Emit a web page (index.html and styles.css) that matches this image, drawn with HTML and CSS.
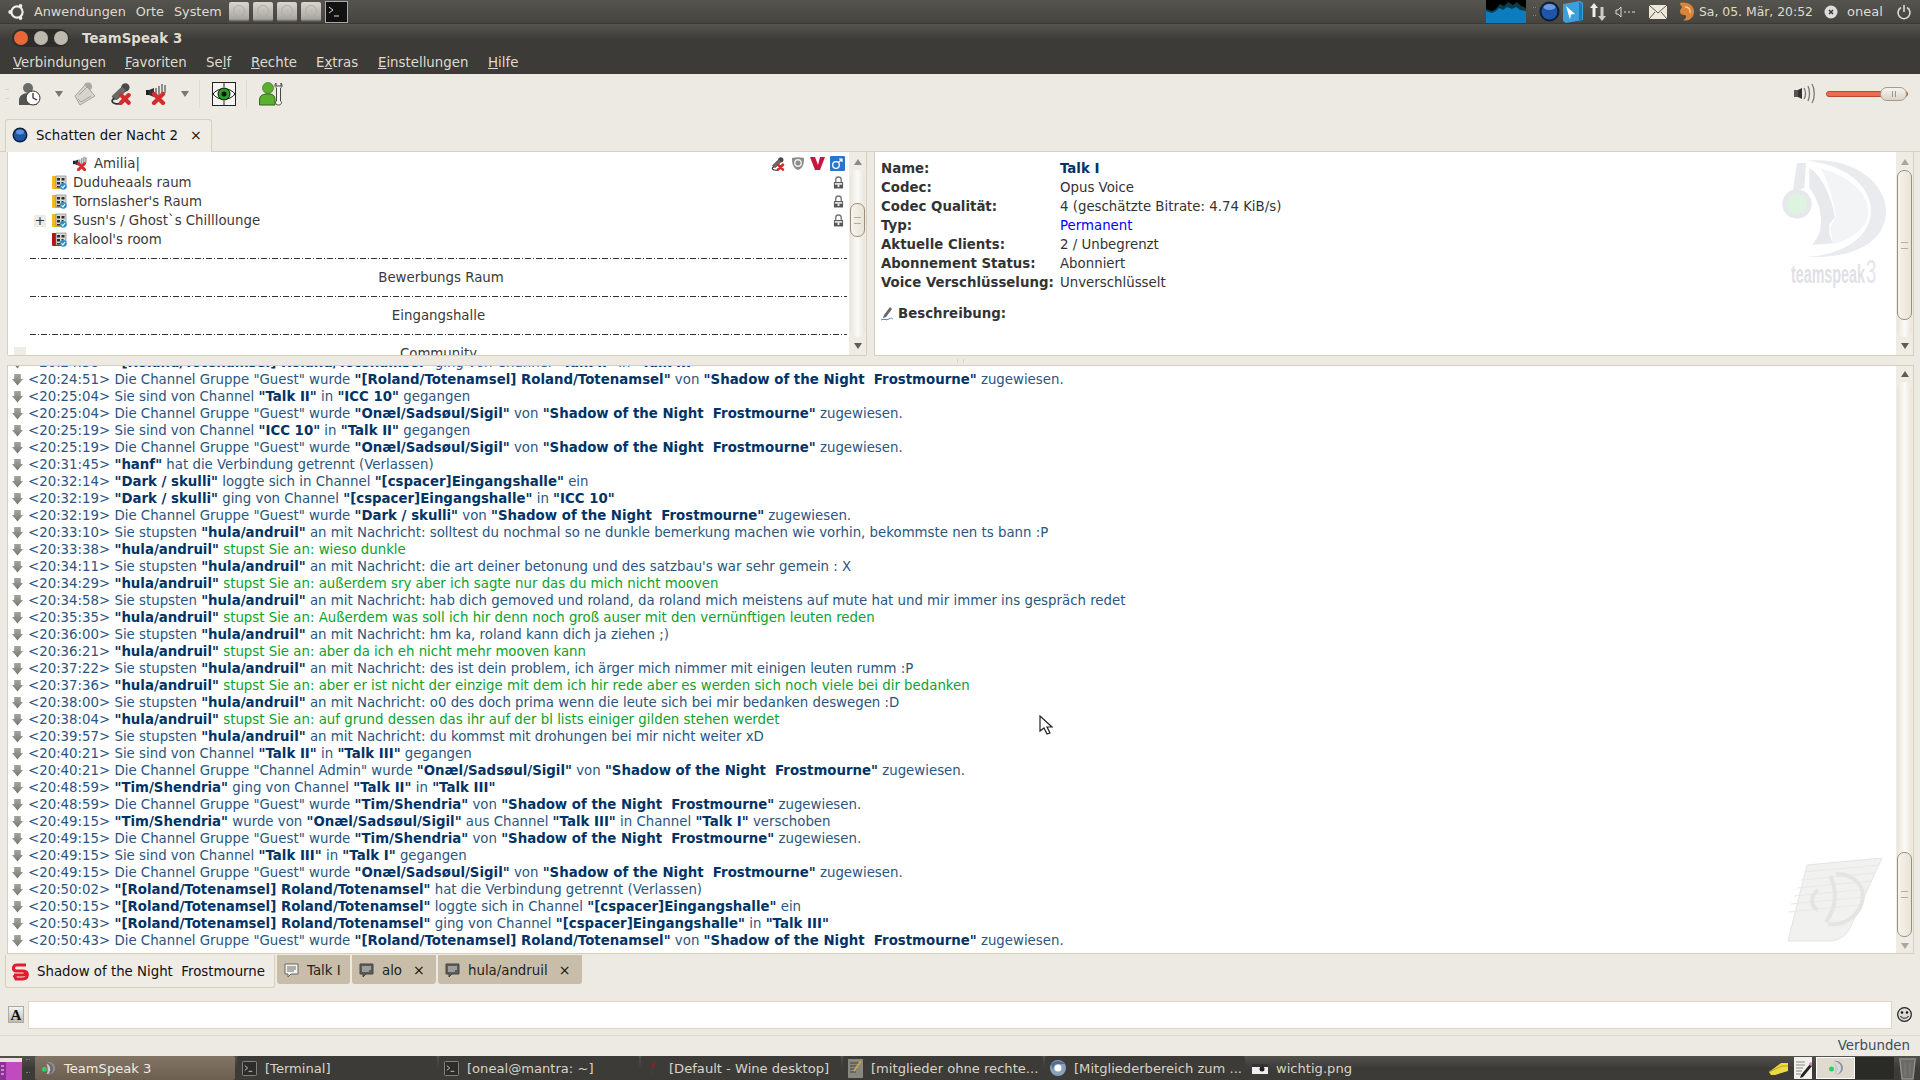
FILE: index.html
```html
<!DOCTYPE html>
<html lang="de">
<head>
<meta charset="utf-8">
<title>TeamSpeak 3</title>
<link rel="stylesheet" href="styles.css">
</head>
<body>
<svg class="defs" width="0" height="0">
  <defs>
    <linearGradient id="disk" x1="0" y1="0" x2="0" y2="1"><stop offset="0" stop-color="#d8d6d0"/><stop offset=".85" stop-color="#a9a7a0"/><stop offset="1" stop-color="#44433f"/></linearGradient>
    <symbol id="disk-i" viewBox="0 0 22 22"><rect x="1" y="1" width="20" height="20" rx="2" fill="url(#disk)"/><circle cx="11" cy="10" r="5.500" fill="none" stroke="#aeaca5"/><circle cx="11" cy="10" r="1.500" fill="#bdbbb4"/></symbol>
    <symbol id="term" viewBox="0 0 16 16"><rect x=".5" y=".5" width="15" height="15" rx="1" fill="#2c2c2a" stroke="#8b8a84"/><path d="M3 5l3 2.500-3 2.500M7 11h4" stroke="#c9c7c0" fill="none"/></symbol>
    <symbol id="chan" viewBox="0 0 15 15"><path d="M1 1h12v13H1.500C.5 14 0 13.500 0 12.500V2c0-.6.4-1 1-1z" fill="#f4b91c"/><rect x="4" y="1" width="10" height="12" fill="#d8d8d4" stroke="#777" stroke-width=".6"/><path d="M5 3h3v2.500H5zM9.500 3h3v2.500h-3zM5 7h3v2.500H5zM5 11h3v1.500H5zM9.500 7h2v1.500h-2z" fill="#2c2c2c"/><circle cx="11.300" cy="11.300" r="3.400" fill="#2a8fc8"/><path d="M9.500 11.300l1.400 1.500 2.100-2.800" stroke="#fff" stroke-width="1.100" fill="none"/></symbol>
    <symbol id="chan-r" viewBox="0 0 15 15"><path d="M1 1h12v13H1.500C.5 14 0 13.500 0 12.500V2c0-.6.4-1 1-1z" fill="#b01414"/><rect x="4" y="1" width="10" height="12" fill="#d8d8d4" stroke="#777" stroke-width=".6"/><path d="M5 3h3v2.500H5zM9.500 3h3v2.500h-3zM5 7h3v2.500H5zM5 11h3v1.500H5zM9.500 7h2v1.500h-2z" fill="#2c2c2c"/><circle cx="11.300" cy="11.300" r="3.400" fill="#2a8fc8"/><path d="M9.500 11.300l1.400 1.500 2.100-2.800" stroke="#fff" stroke-width="1.100" fill="none"/></symbol>
    <symbol id="lock" viewBox="0 0 12 14"><path d="M3 7V4a3 3 0 0 1 6 0v3" fill="none" stroke="#777" stroke-width="1.500"/><rect x="1" y="6.500" width="10" height="7" fill="#555"/><rect x="2" y="7.500" width="8" height="2" fill="#ddd"/><rect x="5" y="9" width="2" height="3" fill="#eee"/></symbol>
    <symbol id="spk-x" viewBox="0 0 22 22"><rect x="0" y="7" width="3" height="5" fill="#222"/><path d="M3 7l5-2v9l-5-2z" fill="#333"/><path d="M10 5v9M13 3v10M16 1v12M19 2v8" stroke="#777" stroke-width="1.600"/><path d="M8 11l9 9M17 11l-9 9" stroke="#d42c2c" stroke-width="4.200" stroke-linecap="round"/></symbol>
    <symbol id="mic-x" viewBox="0 0 20 20"><circle cx="14" cy="4" r="3.800" fill="#4a4a4a"/><path d="M11.500 3L2 12l1.500 2.500 3 .5L15 6.500z" fill="#6a6a6a" stroke="#333" stroke-width=".6"/><path d="M4 14c-4 2-2 5 4 5h2" fill="none" stroke="#333" stroke-width="1.600"/><path d="M10 11l7 7M17 11l-7 7" stroke="#d42c2c" stroke-width="3.800" stroke-linecap="round"/></symbol>
    <symbol id="bubble" viewBox="0 0 15 15"><path d="M1 1h13v10H7l-3 3v-3H1z" fill="#f5f4f0" stroke="#666"/><path d="M3 4h9M3 6h9M3 8h7" stroke="#666"/></symbol>
    <symbol id="bubble-d" viewBox="0 0 15 15"><path d="M1 1h13v10H7l-3 3v-3H1z" fill="#5c5c5a" stroke="#444"/><path d="M3 4h9M3 6h9M3 8h7" stroke="#ddd"/></symbol>
    <symbol id="up" viewBox="0 0 8 8"><path d="M0 7L4 1l4 6z"/></symbol>
    <symbol id="down" viewBox="0 0 8 8"><path d="M0 1l4 6 4-6z"/></symbol>
    <symbol id="tslogo" viewBox="0 0 16 16"><path d="M6 1c5-1 9 3 9 7s-4 7-9 7c4 0 7-3 7-7s-3-6-7-7z" fill="#8a93a8"/><path d="M6 3c3 1 4 4 4 7l-1 1v2l-3 1c2-3 1-8 0-11z" fill="#c4cbd9"/><circle cx="3.500" cy="9" r="2.500" fill="#30d060"/></symbol>
  </defs>
</svg>

<header class="top-panel">
  <svg class="ubuntu" width="18" height="18" viewBox="0 0 18 18"><circle cx="9" cy="9" r="5.600" fill="none" stroke="#eee" stroke-width="2.200"/><circle cx="2.200" cy="9" r="1.900" fill="#eee"/><circle cx="12.500" cy="3" r="1.900" fill="#eee"/><circle cx="12.500" cy="15" r="1.900" fill="#eee"/></svg>
  <nav class="panel-menu"><span>Anwendungen</span><span>Orte</span><span>System</span></nav>
  <div class="launchers">
    <svg width="22" height="22"><use href="#disk-i"/></svg><svg width="22" height="22"><use href="#disk-i"/></svg><svg width="22" height="22"><use href="#disk-i"/></svg><svg width="22" height="22"><use href="#disk-i"/></svg>
    <svg class="term-l" width="23" height="22" viewBox="0 0 23 22"><rect x=".5" y=".5" width="22" height="21" fill="#111" stroke="#aaa"/><path d="M4 6l4 3-4 3M9 15h5" stroke="#ddd" fill="none"/></svg>
  </div>
  <div class="tray">
    <svg class="graph" width="40" height="23" viewBox="0 0 40 23"><rect width="40" height="23" fill="#000"/><path d="M0 9l6 2 4-2 4-5 4 2 4-4 5 3 4-3 4 4 5 2v17H0z" fill="#0a3c4a"/><path d="M0 11l6 2 4-2 3-3 4 2 4-3 5 2 4-2 4 3 6 1v12H0z" fill="#0a7cc0"/></svg>
    <span class="tray-grip"></span>
    <svg class="t1" width="21" height="21" viewBox="0 0 21 21"><circle cx="10.500" cy="10.500" r="10" fill="#0c1c34"/><circle cx="10.500" cy="10.500" r="8" fill="#1f55a8"/><ellipse cx="10.500" cy="6" rx="6" ry="3" fill="#6a9ade"/></svg>
    <svg class="t2" width="22" height="24" viewBox="0 0 22 24"><path d="M1 4l17-3 3 2v17l-17 3-3-2z" fill="#3a9fdc"/><path d="M17 2l3 2v16l-3 2z" fill="#1c78b8"/><path d="M4 6l9 8-4 .5-1 5z" fill="#fff"/></svg>
    <svg class="t3" width="18" height="20" viewBox="0 0 18 20"><path d="M5 1l4 5H6.500v9h-3V6H1z" fill="#eee"/><path d="M13 19l-4-5h2.500V5h3v9H17z" fill="#ccc"/></svg>
    <svg class="t4" width="21" height="14" viewBox="0 0 21 14"><path d="M1 5h2l3-3v10l-3-3H1z" fill="none" stroke="#ddd"/><path d="M9 7h2M13 7h2M17 7h3" stroke="#ddd"/></svg>
    <svg class="t5" width="18" height="14" viewBox="0 0 18 14"><rect width="18" height="14" fill="#eee8d8"/><path d="M0 0l9 8 9-8M0 14l6-7M18 14l-6-7" stroke="#555" fill="none"/></svg>
    <svg class="t6" width="18" height="20" viewBox="0 0 18 20"><path d="M3 1c8-2 15 3 14 10-1 6-7 9-11 7 3-1 4-4 2-5-3 0-5-1-5-4 0-2 2-3 2-4 0-1-2-1-2-4z" fill="#d9843a"/><path d="M8 5c3 0 6 2 5 6" stroke="#f3d2a6" fill="none" stroke-width="1.300"/></svg>
    <span class="clock">Sa, 05. Mär, 20:52</span>
    <svg class="t7" width="14" height="14" viewBox="0 0 14 14"><circle cx="7" cy="7" r="6.500" fill="#ddd"/><path d="M5 5l4 4M9 5l-4 4" stroke="#333" stroke-width="1.500"/></svg>
    <span class="user">oneal</span>
    <svg class="t8" width="16" height="16" viewBox="0 0 16 16"><path d="M5 3.500a6 6 0 1 0 6 0M8 1v7" fill="none" stroke="#ddd" stroke-width="1.600"/></svg>
  </div>
</header>

<div class="titlebar">
  <div class="win-btns"><i class="wb close"></i><i class="wb min"></i><i class="wb max"></i></div>
  <strong class="win-title">TeamSpeak 3</strong>
</div>

<nav class="menubar">
  <span class="m1"><u>V</u>erbindungen</span><span class="m2"><u>F</u>avoriten</span><span class="m3">Se<u>l</u>f</span><span class="m4"><u>R</u>echte</span><span class="m5">E<u>x</u>tras</span><span class="m6"><u>E</u>instellungen</span><span class="m7"><u>H</u>ilfe</span>
</nav>

<div class="toolbar">
  <span class="grip"></span>
  <svg class="ti a" width="24" height="24" viewBox="0 0 24 24"><circle cx="10" cy="6" r="5" fill="#6a6a6a"/><path d="M1 23v-5c0-4 4-7 9-7s9 3 9 7v5z" fill="#555"/><circle cx="15" cy="16" r="7" fill="#fdfdfb" stroke="#333"/><path d="M15 11v5l4 2" stroke="#222" stroke-width="1.200" fill="none"/></svg>
  <svg class="tdrop" width="8" height="8"><use href="#down" fill="#77766f"/></svg>
  <svg class="ti b" width="24" height="24" viewBox="0 0 24 24"><circle cx="15" cy="4.500" r="4" fill="#a9a8a3"/><path d="M12 3L2 14l5 9 15-9-5-6z" fill="#d6d4cd" stroke="#a5a39c"/><path d="M6 13l9-9M5 17l3 3 10-6" stroke="#a5a39c" fill="none"/></svg>
  <svg class="ti c" width="22" height="22"><use href="#mic-x"/></svg>
  <svg class="ti d" width="24" height="22"><use href="#spk-x"/></svg>
  <svg class="tdrop e" width="8" height="8"><use href="#down" fill="#77766f"/></svg>
  <span class="tsep s1"></span>
  <svg class="ti f" width="24" height="24" viewBox="0 0 24 24"><rect x=".5" y=".5" width="23" height="23" fill="#f4f4f0" stroke="#222"/><path d="M12 1v4M12 19v4" stroke="#222"/><path d="M1 12C6 5 18 5 23 12 18 19 6 19 1 12z" fill="#fff" stroke="#111"/><circle cx="12" cy="12" r="6" fill="#22a020" stroke="#111"/><circle cx="12" cy="12" r="2.500" fill="#111"/></svg>
  <span class="tsep s2"></span>
  <svg class="ti g" width="24" height="24" viewBox="0 0 24 24"><circle cx="9" cy="6" r="5.500" fill="#5cb030" stroke="#2e6a14" stroke-width=".6"/><path d="M.5 23v-5c0-5 4-6 8.500-6s7 1 7 6v5z" fill="#5cb030" stroke="#2e6a14"/><path d="M17 1c-2 2-1 4 .5 5v13c-2 1-1 4 2 4s4-3 2-4V6c2-1 2-3 .5-5v3h-5z" fill="#f4f4f0" stroke="#333" stroke-width=".9"/></svg>
  <div class="volume">
    <svg width="23" height="21" viewBox="0 0 23 21"><rect x="1" y="7" width="4" height="7" fill="#555"/><path d="M5 7l4-2v11l-4-2z" fill="#333"/><path d="M11 5c2 3 2 8 0 11M15 3c2 4 2 11 0 15M19 1c3 5 3 14 0 19" fill="none" stroke="#777" stroke-width="1.300"/></svg>
    <div class="vol-track"><span class="vol-thumb"><i></i><i></i></span></div>
  </div>
</div>

<div class="conn-tabs">
  <div class="conn-tab">
    <svg width="16" height="16" viewBox="0 0 16 16"><circle cx="8" cy="8" r="7.500" fill="#0e2240"/><circle cx="8" cy="8" r="6" fill="#1e55a6"/><ellipse cx="8" cy="5" rx="4" ry="2.500" fill="#5f90d8"/></svg>
    <span class="ct-label">Schatten der Nacht 2</span>
    <span class="x">×</span>
  </div>
</div>

<section class="upper">
  <div class="tree-wrap">
    <div class="tree">
      <div class="row client"><svg width="15" height="15"><use href="#spk-x"/></svg><span>Amilia|</span>
        <span class="badges">
          <svg width="14" height="14"><use href="#mic-x"/></svg>
          <svg width="14" height="15" viewBox="0 0 14 15"><path d="M1 2c4-1 8-1 12 0 0 6-1 10-6 12C2 12 1 8 1 2z" fill="#8b8b88"/><circle cx="7" cy="7" r="3.200" fill="none" stroke="#eee" stroke-width="1.400"/></svg>
          <svg width="15" height="15" viewBox="0 0 15 15"><path d="M0 1h5l3 8 2-8h5l-5 13H5z" fill="#cc1440"/></svg>
          <svg width="15" height="15" viewBox="0 0 15 15"><rect width="15" height="15" rx="1" fill="#2a76cc"/><circle cx="6" cy="9" r="3.300" fill="none" stroke="#fff" stroke-width="1.300"/><path d="M8.500 6.500L12 3M9 3h3v3" stroke="#fff" fill="none" stroke-width="1.200"/></svg>
        </span>
      </div>
      <div class="row chan"><svg width="15" height="15"><use href="#chan"/></svg><span>Duduheaals raum</span><svg class="lock" width="11" height="13"><use href="#lock"/></svg></div>
      <div class="row chan"><svg width="15" height="15"><use href="#chan"/></svg><span>Tornslasher's Raum</span><svg class="lock" width="11" height="13"><use href="#lock"/></svg></div>
      <div class="row chan sub"><b class="exp">+</b><svg width="15" height="15"><use href="#chan"/></svg><span>Susn's / Ghost`s Chilllounge</span><svg class="lock" width="11" height="13"><use href="#lock"/></svg></div>
      <div class="row chan"><svg width="15" height="15"><use href="#chan-r"/></svg><span>kalool's room</span></div>
      <div class="row spacer"><i class="dash"></i></div>
      <div class="row spacer-t e1">Bewerbungs Raum</div>
      <div class="row spacer"><i class="dash"></i></div>
      <div class="row spacer-t e2">Eingangshalle</div>
      <div class="row spacer"><i class="dash"></i></div>
      <div class="row spacer-t e2"><b class="exp2"></b>Community</div>
    </div>
    <div class="sb sb-tree">
      <svg class="ar" width="8" height="8"><use href="#up" fill="#8d8b84"/></svg>
      <div class="trough"><div class="thumb th1"><i></i></div></div>
      <svg class="ar" width="8" height="8"><use href="#down" fill="#5d5c56"/></svg>
    </div>
  </div>
  <span class="v-grip"></span>
  <div class="info-wrap">
    <div class="info">
      <div class="info-grid">
        <b>Name:</b><b class="navy">Talk I</b>
        <b>Codec:</b><span>Opus Voice</span>
        <b>Codec Qualität:</b><span>4 (geschätzte Bitrate: 4.74 KiB/s)</span>
        <b>Typ:</b><span class="blue">Permanent</span>
        <b>Aktuelle Clients:</b><span>2 / Unbegrenzt</span>
        <b>Abonnement Status:</b><span>Abonniert</span>
        <b>Voice Verschlüsselung:</b><span>Unverschlüsselt</span>
      </div>
      <div class="desc">
        <svg width="12" height="14" viewBox="0 0 12 14"><path d="M9 0l2 2-6 8-3 1 1-3z" fill="#666"/><path d="M0 13c3-2 5 1 8-1s3 0 4 0" stroke="#3a88c0" fill="none"/></svg>
        <b>Beschreibung:</b>
      </div>
      <svg class="ts-mark" width="108" height="132" viewBox="250 40 324 396">
        <path d="M330 48C460 35 565 110 565 200S470 350 300 335C400 345 520 290 520 200 520 120 440 60 330 48z" fill="#eaebee"/>
        <path d="M370 72C445 90 512 140 512 200 512 250 460 285 405 298L398 250 415 215C405 160 392 110 370 72z" fill="#f3f4f6"/>
        <path d="M335 70C370 90 400 150 412 218L395 238V268L405 296 343 300C385 260 375 180 335 130z" fill="#e8e9ed"/>
        <path d="M298 55H325L320 130 285 142z" fill="#e8e9ed"/>
        <circle cx="298" cy="178" r="44" fill="#e6e8ec"/><circle cx="298" cy="178" r="30" fill="#dcf4e0"/>
        <text transform="translate(280 415) scale(.55 1)" class="ts-txt">teamspeak<tspan class="ts-3" dx="6">3</tspan></text>
      </svg>
    </div>
    <div class="sb sb-info">
      <svg class="ar" width="8" height="8"><use href="#up" fill="#a8a69e"/></svg>
      <div class="trough"><div class="thumb th2"><i></i></div></div>
      <svg class="ar" width="8" height="8"><use href="#down" fill="#5d5c56"/></svg>
    </div>
  </div>
</section>

<div class="h-split"><span class="h-grip"></span></div>

<section class="log-wrap">
  <div class="log">
    <div class="r"><i></i><span>&lt;20:24:38&gt; <b>"[Roland/Totenamsel] Roland/Totenamsel"</b> ging von Channel <b>"Talk II"</b> in <b>"Talk III"</b></span></div>
    <div class="r"><i></i><span>&lt;20:24:51&gt; Die Channel Gruppe "Guest" wurde <b>"[Roland/Totenamsel] Roland/Totenamsel"</b> von <b>"Shadow of the Night  Frostmourne"</b> zugewiesen.</span></div>
    <div class="r"><i></i><span>&lt;20:25:04&gt; Sie sind von Channel <b>"Talk II"</b> in <b>"ICC 10"</b> gegangen</span></div>
    <div class="r"><i></i><span>&lt;20:25:04&gt; Die Channel Gruppe "Guest" wurde <b>"Onæl/Sadsøul/Sigil"</b> von <b>"Shadow of the Night  Frostmourne"</b> zugewiesen.</span></div>
    <div class="r"><i></i><span>&lt;20:25:19&gt; Sie sind von Channel <b>"ICC 10"</b> in <b>"Talk II"</b> gegangen</span></div>
    <div class="r"><i></i><span>&lt;20:25:19&gt; Die Channel Gruppe "Guest" wurde <b>"Onæl/Sadsøul/Sigil"</b> von <b>"Shadow of the Night  Frostmourne"</b> zugewiesen.</span></div>
    <div class="r"><i></i><span>&lt;20:31:45&gt; <b>"hanf"</b> hat die Verbindung getrennt (Verlassen)</span></div>
    <div class="r"><i></i><span>&lt;20:32:14&gt; <b>"Dark / skulli"</b> loggte sich in Channel <b>"[cspacer]Eingangshalle"</b> ein</span></div>
    <div class="r"><i></i><span>&lt;20:32:19&gt; <b>"Dark / skulli"</b> ging von Channel <b>"[cspacer]Eingangshalle"</b> in <b>"ICC 10"</b></span></div>
    <div class="r"><i></i><span>&lt;20:32:19&gt; Die Channel Gruppe "Guest" wurde <b>"Dark / skulli"</b> von <b>"Shadow of the Night  Frostmourne"</b> zugewiesen.</span></div>
    <div class="r"><i></i><span>&lt;20:33:10&gt; Sie stupsten <b>"hula/andruil"</b> an mit Nachricht: solltest du nochmal so ne dunkle bemerkung machen wie vorhin, bekommste nen ts bann :P</span></div>
    <div class="r"><i></i><span>&lt;20:33:38&gt; <b>"hula/andruil"</b> <em>stupst Sie an: wieso dunkle</em></span></div>
    <div class="r"><i></i><span>&lt;20:34:11&gt; Sie stupsten <b>"hula/andruil"</b> an mit Nachricht: die art deiner betonung und des satzbau's war sehr gemein : X</span></div>
    <div class="r"><i></i><span>&lt;20:34:29&gt; <b>"hula/andruil"</b> <em>stupst Sie an: außerdem sry aber ich sagte nur das du mich nicht mooven</em></span></div>
    <div class="r"><i></i><span>&lt;20:34:58&gt; Sie stupsten <b>"hula/andruil"</b> an mit Nachricht: hab dich gemoved und roland, da roland mich meistens auf mute hat und mir immer ins gespräch redet</span></div>
    <div class="r"><i></i><span>&lt;20:35:35&gt; <b>"hula/andruil"</b> <em>stupst Sie an: Außerdem was soll ich hir denn noch groß auser mit den vernünftigen leuten reden</em></span></div>
    <div class="r"><i></i><span>&lt;20:36:00&gt; Sie stupsten <b>"hula/andruil"</b> an mit Nachricht: hm ka, roland kann dich ja ziehen ;)</span></div>
    <div class="r"><i></i><span>&lt;20:36:21&gt; <b>"hula/andruil"</b> <em>stupst Sie an: aber da ich eh nicht mehr mooven kann</em></span></div>
    <div class="r"><i></i><span>&lt;20:37:22&gt; Sie stupsten <b>"hula/andruil"</b> an mit Nachricht: des ist dein problem, ich ärger mich nimmer mit einigen leuten rumm :P</span></div>
    <div class="r"><i></i><span>&lt;20:37:36&gt; <b>"hula/andruil"</b> <em>stupst Sie an: aber er ist nicht der einzige mit dem ich hir rede aber es werden sich noch viele bei dir bedanken</em></span></div>
    <div class="r"><i></i><span>&lt;20:38:00&gt; Sie stupsten <b>"hula/andruil"</b> an mit Nachricht: o0 des doch prima wenn die leute sich bei mir bedanken deswegen :D</span></div>
    <div class="r"><i></i><span>&lt;20:38:04&gt; <b>"hula/andruil"</b> <em>stupst Sie an: auf grund dessen das ihr auf der bl lists einiger gilden stehen werdet</em></span></div>
    <div class="r"><i></i><span>&lt;20:39:57&gt; Sie stupsten <b>"hula/andruil"</b> an mit Nachricht: du kommst mit drohungen bei mir nicht weiter xD</span></div>
    <div class="r"><i></i><span>&lt;20:40:21&gt; Sie sind von Channel <b>"Talk II"</b> in <b>"Talk III"</b> gegangen</span></div>
    <div class="r"><i></i><span>&lt;20:40:21&gt; Die Channel Gruppe "Channel Admin" wurde <b>"Onæl/Sadsøul/Sigil"</b> von <b>"Shadow of the Night  Frostmourne"</b> zugewiesen.</span></div>
    <div class="r"><i></i><span>&lt;20:48:59&gt; <b>"Tim/Shendria"</b> ging von Channel <b>"Talk II"</b> in <b>"Talk III"</b></span></div>
    <div class="r"><i></i><span>&lt;20:48:59&gt; Die Channel Gruppe "Guest" wurde <b>"Tim/Shendria"</b> von <b>"Shadow of the Night  Frostmourne"</b> zugewiesen.</span></div>
    <div class="r"><i></i><span>&lt;20:49:15&gt; <b>"Tim/Shendria"</b> wurde von <b>"Onæl/Sadsøul/Sigil"</b> aus Channel <b>"Talk III"</b> in Channel <b>"Talk I"</b> verschoben</span></div>
    <div class="r"><i></i><span>&lt;20:49:15&gt; Die Channel Gruppe "Guest" wurde <b>"Tim/Shendria"</b> von <b>"Shadow of the Night  Frostmourne"</b> zugewiesen.</span></div>
    <div class="r"><i></i><span>&lt;20:49:15&gt; Sie sind von Channel <b>"Talk III"</b> in <b>"Talk I"</b> gegangen</span></div>
    <div class="r"><i></i><span>&lt;20:49:15&gt; Die Channel Gruppe "Guest" wurde <b>"Onæl/Sadsøul/Sigil"</b> von <b>"Shadow of the Night  Frostmourne"</b> zugewiesen.</span></div>
    <div class="r"><i></i><span>&lt;20:50:02&gt; <b>"[Roland/Totenamsel] Roland/Totenamsel"</b> hat die Verbindung getrennt (Verlassen)</span></div>
    <div class="r"><i></i><span>&lt;20:50:15&gt; <b>"[Roland/Totenamsel] Roland/Totenamsel"</b> loggte sich in Channel <b>"[cspacer]Eingangshalle"</b> ein</span></div>
    <div class="r"><i></i><span>&lt;20:50:43&gt; <b>"[Roland/Totenamsel] Roland/Totenamsel"</b> ging von Channel <b>"[cspacer]Eingangshalle"</b> in <b>"Talk III"</b></span></div>
    <div class="r"><i></i><span>&lt;20:50:43&gt; Die Channel Gruppe "Guest" wurde <b>"[Roland/Totenamsel] Roland/Totenamsel"</b> von <b>"Shadow of the Night  Frostmourne"</b> zugewiesen.</span></div>
    <svg class="note-mark" width="95" height="84" viewBox="0 0 95 84"><path d="M19 7L94 0 62 70C58 78 50 83 40 83H0z" fill="#f1f1f0" stroke="#e4e4e2"/><g stroke="#e6e8ec"><path d="M16 14l75-7M13 22l74-7M9 30l75-7M6 38l74-7M3 46l74-7M0 54l73-7"/></g><path d="M48 16c20 0 30 14 26 28-4 16-20 24-34 22M30 32c-8 6-8 16 0 20M42 18c8 14 6 32-4 46" stroke="#e4e4e2" stroke-width="4" fill="none"/></svg>
  </div>
  <div class="sb sb-log">
    <svg class="ar" width="8" height="8"><use href="#up" fill="#5d5c56"/></svg>
    <div class="trough"><div class="thumb th3"><i></i></div></div>
    <svg class="ar" width="8" height="8"><use href="#down" fill="#a8a69e"/></svg>
  </div>
</section>

<div class="chat-tabs">
  <div class="ctab active">
    <svg width="18" height="18" viewBox="0 0 18 18"><path d="M15 2H6C2 2 1 7 5 8h7c3 0 3 4 0 4H3M3 12l2 4h7c5 0 6-7 1-8" fill="none" stroke="#e21c2c" stroke-width="3"/></svg>
    <span class="l0">Shadow of the Night  Frostmourne</span>
  </div>
  <div class="ctab t1"><svg width="15" height="15"><use href="#bubble"/></svg><span>Talk I</span></div>
  <div class="ctab t2"><svg width="15" height="15"><use href="#bubble-d"/></svg><span>alo</span><span class="x">×</span></div>
  <div class="ctab t3"><svg width="15" height="15"><use href="#bubble-d"/></svg><span>hula/andruil</span><span class="x">×</span></div>
</div>

<div class="input-row">
  <span class="fmt">A</span>
  <div class="input"></div>
  <svg class="smile" width="15" height="15" viewBox="0 0 15 15"><circle cx="7.500" cy="7.500" r="6.800" fill="#dcdad4" stroke="#222" stroke-width="1.200"/><circle cx="5" cy="5.500" r="1.200" fill="#111"/><circle cx="10" cy="5.500" r="1.200" fill="#111"/><path d="M3.500 9c1.500 3 6.500 3 8 0" fill="none" stroke="#111"/></svg>
</div>

<div class="status">Verbunden</div>

<footer class="taskbar">
  <svg class="show-desk" width="22" height="22" viewBox="0 0 22 22"><rect width="22" height="22" fill="#c24ac0"/><rect y="0" width="22" height="4" fill="#e8e4da"/><rect x="0" y="4" width="6" height="18" fill="#8e2f96"/><path d="M1 8h3M1 12h3M1 16h3" stroke="#eee"/></svg>
  <span class="task-grip"></span>
  <div class="tasks">
    <div class="task on"><svg width="15" height="15"><use href="#tslogo"/></svg><span>TeamSpeak 3</span></div>
    <div class="task"><svg width="15" height="15"><use href="#term"/></svg><span>[Terminal]</span></div>
    <div class="task"><svg width="15" height="15"><use href="#term"/></svg><span>[oneal@mantra: ~]</span></div>
    <div class="task"><svg width="15" height="16" viewBox="0 0 15 16"><path d="M7 1c3 0 2 5 0 7-1 2-2 5-2 7" stroke="#444" fill="none"/><path d="M6 3c3-1 3 3 1 5-2 1-2-3-1-5z" fill="#8a1f24"/></svg><span>[Default - Wine desktop]</span></div>
    <div class="task"><svg width="15" height="19" viewBox="0 0 15 19"><rect width="15" height="19" fill="#88887f"/><path d="M2 4h9M2 7h9M2 10h7M2 13h6" stroke="#444"/><path d="M13 2L6 12" stroke="#c9a64c" stroke-width="2"/></svg><span>[mitglieder ohne rechte...</span></div>
    <div class="task"><svg width="16" height="18" viewBox="0 0 16 18"><circle cx="8" cy="9" r="8" fill="#8aa0bc"/><circle cx="8" cy="9" r="3.500" fill="#fff"/><path d="M1 5c4-4 10-4 14 0H8c-3 0-5 2-5 6z" fill="#4e6e96"/></svg><span>[Mitgliederbereich zum ...</span></div>
    <div class="task last"><svg width="16" height="12" viewBox="0 0 16 12"><rect y="2" width="16" height="10" fill="#eee"/><rect y="2" width="16" height="3" fill="#333"/><circle cx="10" cy="7" r="2.500" fill="#222"/></svg><span>wichtig.png</span></div>
  </div>
  <div class="task-right">
    <svg class="tr1" width="19" height="13" viewBox="0 0 19 13"><path d="M0 10L12 1h7v8L6 13H2z" fill="#ecd944"/><path d="M0 10l13-6h6" stroke="#b8a420" fill="none"/></svg>
    <svg class="tr2" width="18" height="22" viewBox="0 0 18 22"><rect width="18" height="22" fill="#f1f0ea"/><path d="M2 5h9M2 8h9M2 11h7M2 14h6M2 17h5" stroke="#888"/><path d="M16 7L7 18l-1 3 3-1 9-11z" fill="#222"/><circle cx="17" cy="7" r="1.800" fill="#d088c8"/></svg>
    <div class="ws on"><svg width="16" height="16"><use href="#tslogo"/></svg></div>
    <div class="ws"></div>
    <svg class="trash" width="19" height="23" viewBox="0 0 19 23"><path d="M1 2h17M2 3l2 19h11l2-19" fill="#6a6a66" stroke="#8e8e8a" stroke-width="1.500"/><path d="M7 6v13M12 6v13" stroke="#7e7e79"/></svg>
  </div>
</footer>

<svg class="cursor" width="14" height="20" viewBox="0 0 14 20"><path d="M1 1v15l4-3 3 6 3-1-3-6h5z" fill="#fff" stroke="#222" stroke-width="1.200"/></svg>
</body>
</html>
```
FILE: styles.css
```css
* { box-sizing: border-box; }
html, body { margin: 0; padding: 0; }
body {
  width: 1920px; height: 1080px; overflow: hidden;
  display: flex; flex-direction: column;
  background: #edeae3;
  font: 13.33px/17px "DejaVu Sans", sans-serif;
  color: #333;
  position: relative;
}
.defs { position: absolute; }
svg { flex: none; display: block; }

/* top panel */
.top-panel {
  height: 24px; display: flex; align-items: center;
  background: linear-gradient(#56544e, #45443f);
  color: #dfdbd2; border-bottom: 1px solid #3a3935;
}
.ubuntu { margin-left: 8px; }
.panel-menu { display: flex; margin-left: 8px; gap: 10px; font-size: 12.8px; }
.launchers { display: flex; margin-left: 6px; gap: 2px; }
.term-l { margin-left: 1px; }
.tray { display: flex; align-items: center; margin-left: auto; height: 24px; }
.graph { margin-right: 7px; }
.tray-grip { width: 3px; height: 9px; margin-right: 3px; border-top: 1px dotted #888; border-bottom: 1px dotted #888; }
.t1 { margin-right: 2px; }
.t2 { margin-right: 5px; }
.t3 { margin-right: 8px; }
.t4 { margin-right: 13px; }
.t5 { margin-right: 10px; }
.t6 { margin-right: 4px; }
.clock { width: 125px; white-space: nowrap; font-size: 12.4px; }
.t7 { margin-right: 9px; }
.user { width: 49px; font-size: 13px; }
.t8 { margin-right: 8px; }

/* window title + menu */
.titlebar {
  height: 26px; display: flex; align-items: center; padding-top: 2px;
  background: linear-gradient(#56544e, #3c3b37 60%);
  color: #dfdbd2;
}
.win-btns {
  margin-left: 12px; width: 57px; height: 18px; border-radius: 9px;
  background: #2e2d2a; display: flex; align-items: center; justify-content: center; gap: 6px;
}
.wb { width: 14px; height: 14px; border-radius: 50%; background: #bdb9ae; }
.wb.close { background: #e8683a; }
.win-title { margin-left: 13px; letter-spacing: .1px; }
.menubar { height: 24px; display: flex; align-items: center; background: #3c3b37; color: #dfdbd2; padding-left: 13px; }
.menubar span { display: block; }
.m1 { width: 112px; } .m2 { width: 81px; } .m3 { width: 45px; } .m4 { width: 65px; } .m5 { width: 62px; } .m6 { width: 110px; }

/* toolbar */
.toolbar { height: 42px; display: flex; align-items: center; padding-right: 12px; padding-bottom: 3px; }
.grip { width: 4px; height: 10px; margin-left: 5px; border-top: 1px solid #d8d4cb; border-bottom: 1px solid #d8d4cb; }
.ti.a { margin-left: 9px; }
.tdrop { margin-left: 13px; }
.ti.b { margin-left: 10px; }
.ti.c { margin-left: 13px; }
.ti.d { margin-left: 13px; }
.tdrop.e { margin-left: 12px; }
.tsep { width: 1px; height: 28px; background: #e0dcd3; }
.s1 { margin-left: 10px; }
.ti.f { margin-left: 12px; }
.s2 { margin-left: 10px; }
.ti.g { margin-left: 12px; }
.volume { margin-left: auto; display: flex; align-items: center; gap: 10px; }
.vol-track { width: 82px; height: 6px; background: #ee6a50; border: 1px solid #b84a32; border-radius: 3px; display: flex; align-items: center; justify-content: flex-end; }
.vol-thumb {
  width: 27px; height: 14px; border-radius: 7px; border: 1px solid #a59c8a;
  background: linear-gradient(#f6f4ef, #d9d4c8); display: flex; justify-content: center; align-items: center; gap: 2px;
}
.vol-thumb i { width: 1px; height: 6px; background: #9a9588; }

/* connection tabs */
.conn-tabs { height: 36px; padding: 3px 0 0 5px; border-bottom: 1px solid #d9d0bc; }
.conn-tab {
  width: 207px; height: 33px; display: flex; align-items: center; padding-bottom: 2px;
  background: #efebe5; border: 1px solid #d8cfbb; border-bottom: 0; border-radius: 3px 3px 0 0;
  padding-left: 6px; color: #111;
}
.ct-label { margin-left: 8px; white-space: nowrap; }
.x { font: 14px/14px "DejaVu Sans", sans-serif; color: #111; }
.conn-tab .x { margin-left: 12px; }

/* upper split */
.upper { height: 204px; display: flex; padding-left: 7px; }
.tree-wrap { width: 860px; display: flex; border: 1px solid #d8cfbb; border-top: 0; background: #efebe5; border-radius: 0 0 2px 2px; }
.tree { width: 843px; background: #fff; overflow: hidden; padding-top: 2px; }
.row { height: 19px; display: flex; align-items: center; white-space: nowrap; }
.row > svg { margin-right: 6px; }
.client { padding-left: 65px; }
.chan { padding-left: 44px; }
.badges { margin-left: auto; display: flex; gap: 5px; align-items: center; padding-right: 4px; }
.badges svg:first-child { margin-right: 1px; }
.row > span:not(.badges) { color: #3a3a3a; }
.lock { margin-left: auto; margin-right: 5px !important; }
.exp { width: 12px; height: 12px; margin-left: -18px; margin-right: 6px; background: #efebe5; font: 13px/12px "DejaVu Sans", sans-serif; text-align: center; }
.spacer { padding: 0 0 0 22px; }
.dash { display: block; width: 817px; height: 1px;
  background: repeating-linear-gradient(90deg, #333 0 6px, transparent 6px 8px, #333 8px 9px, transparent 9px 11px); }
.spacer-t { justify-content: center; color: #3a3a3a; position: relative; width: 843px; }
.e1 { padding-left: 23px; }
.e2 { padding-left: 18px; }
.exp2 { position: absolute; left: 6px; top: 3px; width: 12px; height: 12px; background: #efebe5; }

/* scrollbars */
.sb { width: 17px; display: flex; flex-direction: column; align-items: center; padding-top: 6px; padding-bottom: 5px; background: #efebe5; }
.ar { margin: 0 auto; height: 8px; }
.trough { flex: 1; width: 15px; margin: 4px 0 5px; border-radius: 7px; background: linear-gradient(90deg, #e9e5dc, #fbfaf7 50%, #e9e5dc); }
.thumb { border: 1px solid #9d9078; border-radius: 7px; background: linear-gradient(90deg, #f6f3ec, #e9e4d8); display: flex; align-items: center; justify-content: center; }
.thumb i { display: block; width: 7px; height: 7px; border-top: 1px solid #b5ae9f; border-bottom: 1px solid #b5ae9f; position: relative; }
.th1 { margin-top: 33px; height: 34px; }
.th2 { height: 150px; }
.th3 { height: 85px; margin-top: 470px; }
.sb-log { padding-top: 4px; padding-bottom: 4px; }
.v-grip { width: 7px; }
.info-wrap { flex: 1; display: flex; border: 1px solid #d8cfbb; border-top: 0; background: #efebe5; margin-right: 6px; }
.info { flex: 1; background: #fff; position: relative; padding: 7px 0 0 6px; }
.info-grid { display: grid; grid-template-columns: 179px auto; grid-auto-rows: 19px; line-height: 19px; justify-content: start; color: #333; }
.navy { color: #003366; }
.blue { color: #0000ff; }
.desc { display: flex; align-items: center; gap: 5px; margin-top: 12px; height: 19px; }
.ts-mark { position: absolute; right: 7px; top: 6px; }
.ts-txt { font: bold 78px "Liberation Sans", sans-serif; fill: #dfe1e8; }
.ts-3 { font: 100px "Liberation Sans", sans-serif; fill: #e4e6ee; }

.h-split { height: 9px; display: flex; justify-content: center; align-items: center; }
.h-grip { width: 7px; height: 4px; border-left: 1px solid #d8d4cb; border-right: 1px solid #d8d4cb; }

/* log */
.log-wrap { height: 589px; display: flex; margin-left: 7px; margin-right: 6px; border: 1px solid #d8cfbb; background: #efebe5; }
.log {
  flex: 1; background: #fff; overflow: hidden; display: flex; flex-direction: column; justify-content: flex-end;
  padding: 0 0 4px 4px; position: relative; color: #2a5580;
}
.r { flex: none; height: 17px; display: flex; align-items: center; white-space: pre; }
.r > i { width: 11px; height: 12px; margin-right: 5px; background: linear-gradient(#a4a4a0, #77776f); clip-path: polygon(20% 0, 80% 0, 80% 45%, 100% 45%, 50% 100%, 0 45%, 20% 45%); }
.r b { color: #003366; }
.r em { font-style: normal; color: #0ca22c; }
.note-mark { position: absolute; right: 13px; bottom: 11px; }

/* chat tabs */
.chat-tabs { height: 39px; padding: 1px 0 0 5px; display: flex; align-items: flex-start; white-space: pre; }
.ctab { height: 29px; display: flex; align-items: center; background: #c8bda8; border-radius: 0 0 3px 3px; color: #222; padding-top: 1px; }
.ctab.active { width: 270px; height: 33px; background: #efebe5; border: 1px solid #d8cfbb; border-top: 0; padding-left: 5px; padding-top: 1px; color: #111; margin-right: 2px; }
.l0 { margin-left: 7px; }
.ctab.t1 { width: 73px; padding-left: 7px; margin-right: 2px; }
.ctab.t2 { width: 84px; padding-left: 7px; margin-right: 2px; }
.ctab.t3 { width: 144px; padding-left: 7px; }
.ctab > svg + span { margin-left: 8px; }
.ctab.t2 .x { margin-left: 11px; }
.ctab.t3 .x { margin-left: 11px; }

/* input */
.input-row { height: 29px; display: flex; align-items: center; margin-top: 7px; padding-left: 8px; }
.fmt { width: 16px; height: 17px; background: linear-gradient(#f5f4f0, #bdbab2); border: 1px solid #aaa; text-align: center; font: bold 15px/16px "Liberation Serif", serif; color: #111; }
.input { width: 1864px; height: 28px; margin-left: 4px; background: #fff; border: 1px solid #ded5c2; }
.smile { margin-left: 5px; }

.status { height: 21px; margin-top: 6px; border-top: 1px solid #e0d9c9; text-align: right; padding: 1px 10px 0 0; color: #3c4a5c; }

/* taskbar */
.taskbar { height: 24px; display: flex; align-items: flex-end; background: linear-gradient(#53514c, #3c3b37 50%); color: #d8d4c8; font-size: 13.1px; }
.task-grip { width: 4px; height: 14px; margin: 0 5px 4px 4px; border-top: 1px dotted #777; border-bottom: 1px dotted #777; align-self: center; }
.tasks { display: flex; gap: 2px; height: 24px; }
.task { width: 200px; height: 24px; display: flex; align-items: center; gap: 8px; padding-left: 5px; background: #3c3b37; border-radius: 2px; white-space: nowrap; overflow: hidden; }
.task.on { background: linear-gradient(#837565, #6c5f50); color: #f0ece2; padding-left: 6px; }
.task.last { background: transparent; }
.task-right { margin-left: auto; display: flex; align-items: center; height: 24px; }
.tr1 { margin-right: 6px; }
.tr2 { margin-right: 4px; }
.ws { width: 39px; height: 22px; background: #2a2a27; display: flex; justify-content: center; align-items: center; }
.ws.on { background: #e0d9cd; border: 1px solid #fff; }
.trash { margin: 0 3px 0 4px; }

.cursor { position: absolute; left: 1039px; top: 715px; }
```
